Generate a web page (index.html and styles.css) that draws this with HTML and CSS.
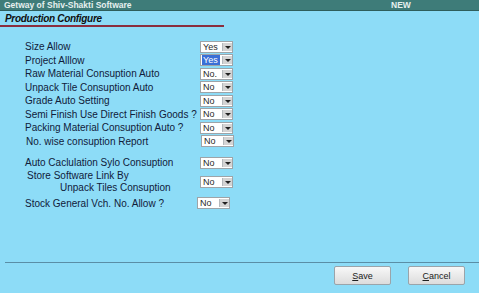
FILE: index.html
```html
<!DOCTYPE html>
<html lang="en">
  <head>
    <meta charset="UTF-8" />
    <title>Production Configure</title>
    <link rel="stylesheet" href="styles.css">
  </head>
  <body>
    <div class="titlebar">
      <span class="app-name">Getway of Shiv-Shakti Software</span>
      <span class="mode">NEW</span>
    </div>

    <div class="heading">Production Configure</div>

    <div class="form">
      <div class="row">
        <span class="label">Size Allow</span>
        <span class="combo"><span class="value">Yes</span><span class="arrow"></span></span>
      </div>
      <div class="row">
        <span class="label">Project Alllow</span>
        <span class="combo"><span class="value"><span class="selected">Yes</span></span><span class="arrow"></span></span>
      </div>
      <div class="row">
        <span class="label">Raw Material Consuption Auto</span>
        <span class="combo"><span class="value">No.</span><span class="arrow"></span></span>
      </div>
      <div class="row">
        <span class="label">Unpack Tile Consuption Auto</span>
        <span class="combo"><span class="value">No</span><span class="arrow"></span></span>
      </div>
      <div class="row">
        <span class="label">Grade Auto Setting</span>
        <span class="combo"><span class="value">No</span><span class="arrow"></span></span>
      </div>
      <div class="row">
        <span class="label">Semi Finish Use Direct Finish Goods ?</span>
        <span class="combo"><span class="value">No</span><span class="arrow"></span></span>
      </div>
      <div class="row">
        <span class="label">Packing Material Consuption Auto ?</span>
        <span class="combo"><span class="value">No</span><span class="arrow"></span></span>
      </div>
      <div class="row">
        <span class="label nudge">No. wise consuption Report</span>
        <span class="combo nudge"><span class="value">No</span><span class="arrow"></span></span>
      </div>

      <div class="row spaced">
        <span class="label">Auto Caclulation Sylo Consuption</span>
        <span class="combo"><span class="value">No</span><span class="arrow"></span></span>
      </div>
      <div class="row double">
        <span class="label">
          <span class="line1">Store Software Link By</span>
          <span class="line2">Unpack Tiles Consuption</span>
        </span>
        <span class="combo"><span class="value">No</span><span class="arrow"></span></span>
      </div>
      <div class="row last">
        <span class="label">Stock General Vch. No. Allow ?</span>
        <span class="combo back"><span class="value">No</span><span class="arrow"></span></span>
      </div>
    </div>

    <div class="footer">
      <button class="btn"><u>S</u>ave</button>
      <button class="btn"><u>C</u>ancel</button>
    </div>
  </body>
</html>
```

FILE: styles.css
```css
body {
  margin: 0;
  width: 479px;
  height: 293px;
  background-color: #8ddcf7;
  font-family: "Liberation Sans", Arial, sans-serif;
  color: #10203a;
  overflow: hidden;
}

.titlebar {
  height: 10px;
  background-color: #3e7c79;
  border-bottom: 1px solid #2e5e5c;
  color: #e6f0ef;
  font-size: 8.5px;
  font-weight: bold;
  line-height: 11px;
  display: flex;
  padding-left: 4px;
}

.app-name {
  width: 387px;
}

.heading {
  width: 219px;
  padding: 2px 0 0 5px;
  height: 12px;
  font-size: 10px;
  font-weight: bold;
  font-style: italic;
  line-height: 12px;
  color: #101010;
  letter-spacing: -0.3px;
  border-bottom: 2px solid #8a2e3e;
}

.form {
  padding-left: 25px;
  margin-top: 13px;
  font-size: 10px;
}

.row {
  display: grid;
  grid-template-columns: 175px auto;
  align-items: center;
  height: 13.5px;
}

.row.spaced {
  margin-top: 8px;
}

.row.double {
  height: 24px;
  line-height: 12px;
}

.row.last {
  margin-top: 3px;
}

.label {
  white-space: nowrap;
}

.label.nudge {
  padding-left: 1px;
}

.line1 {
  display: block;
  padding-left: 2px;
}

.line2 {
  display: block;
  padding-left: 35px;
}

.combo {
  display: flex;
  width: 31px;
  height: 10px;
  border: 1px solid #9ea4a8;
  background-color: #ffffff;
}

.combo.nudge {
  margin-left: 1px;
}

.combo.back {
  margin-left: -3px;
}

.value {
  width: 20px;
  font-size: 9px;
  line-height: 10px;
  padding-left: 2px;
  color: #2a2a2a;
}

.selected {
  background-color: #3b6fd6;
  color: #ffffff;
  padding: 0 2px 0 1px;
  margin-left: -1px;
}

.arrow {
  width: 9px;
  margin: 1px 0;
  background-color: #d4d4d4;
  border-left: 1px solid #b4b8bc;
  position: relative;
}

.arrow::after {
  content: "";
  position: absolute;
  left: 2px;
  top: 3px;
  border-left: 3px solid transparent;
  border-right: 3px solid transparent;
  border-top: 3px solid #202020;
}

.footer {
  margin: 52px 0 0 5px;
  border-top: 1px solid #5a8ea6;
  display: flex;
  justify-content: flex-end;
  gap: 17px;
  padding: 3px 14px 0 0;
}

.btn {
  width: 57px;
  height: 19px;
  padding: 0;
  font-family: "Liberation Sans", Arial, sans-serif;
  font-size: 9px;
  color: #202020;
  border: 1px solid #9aa4aa;
  border-radius: 2px;
  background: linear-gradient(#f8f8f8, #dcdcdc);
}
```
